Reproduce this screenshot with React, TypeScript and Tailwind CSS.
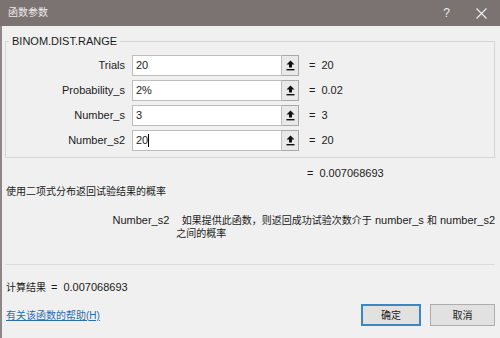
const rows = [
  { label: 'Trials', value: '20', result: '20' },
  { label: 'Probability_s', value: '2%', result: '0.02' },
  { label: 'Number_s', value: '3', result: '3' },
  { label: 'Number_s2', value: '20', result: '20', caret: true },
];

function CollapseIcon() {
  return (
    <svg width="9" height="11" viewBox="0 0 9 11">
      <path d="M4.5 0.5 L8.5 4.5 L6 4.5 L6 7.5 L3 7.5 L3 4.5 L0.5 4.5 Z" fill="#111" />
      <rect x="0.5" y="9" width="8" height="1.4" fill="#111" />
    </svg>
  );
}

export default function App() {
  return (
    <div
      className="w-[500px] h-[338px] bg-[#f0f0f0] flex flex-col overflow-hidden text-[11px] text-[#1b1b1b]"
      style={{ fontFamily: '"Liberation Sans", "Noto Sans CJK SC", sans-serif' }}
    >
      {/* Title bar */}
      <div className="h-[26px] shrink-0 bg-[#7b7372] flex items-center pl-[8px] text-[#eeeaea]">
        <span className="text-[10px] leading-none">函数参数</span>
        <span className="ml-auto mr-[26px] text-[12px] font-light leading-none">?</span>
        <svg width="11" height="11" viewBox="0 0 11 11" className="mr-[13px]">
          <path d="M0.5 0.5 L10.5 10.5 M10.5 0.5 L0.5 10.5" stroke="#f2efef" strokeWidth="1.1" />
        </svg>
      </div>

      {/* Body */}
      <div className="flex-1 flex flex-col border-l-2 border-[#8c8686] pl-[3px] pr-[5px]">
        <fieldset className="mt-[9px] border border-[#d6d6d6] pb-[6px]">
          <legend className="ml-[3px] px-[3px] leading-[13px]">BINOM.DIST.RANGE</legend>
          <div className="flex flex-col gap-[4px] pt-[7px]">
            {rows.map((r) => (
              <div key={r.label} className="flex items-center h-[21px]">
                <span className="w-[119px] text-right">{r.label}</span>
                <div className="ml-[7px] w-[150px] h-[21px] bg-white border border-[#bdbdbd] flex items-center pl-[3px]">
                  <span>{r.value}</span>
                  {r.caret && <span className="w-px h-[13px] bg-black" />}
                </div>
                <div className="w-[17px] h-[21px] bg-[#e9e9e9] border border-l-0 border-[#a9a9a9] flex items-center justify-center">
                  <CollapseIcon />
                </div>
                <span className="ml-[10px]">=</span>
                <span className="ml-[6px]">{r.result}</span>
              </div>
            ))}
          </div>
        </fieldset>

        <div className="flex h-[13px] leading-[13px] mt-[9px]">
          <span className="ml-[302px]">=</span>
          <span className="ml-[6px]">0.007068693</span>
        </div>

        <div className="mt-[5px] ml-[1px] h-[13px] leading-[13px] text-[10px]">使用二项式分布返回试验结果的概率</div>

        <div className="flex mt-[16px] leading-[13px]">
          <span className="w-[170px] text-right">Number_s2</span>
          <div className="ml-[7px] whitespace-nowrap">
            <span className="text-[10px]">&nbsp;&nbsp;如果提供此函数，则返回成功试验次数介于</span> number_s <span className="text-[10px]">和</span> number_s2
            <br />
            <span className="text-[10px]">之间的概率</span>
          </div>
        </div>

        <div className="mt-[24px] h-px bg-[#dcdcdc]" />

        <div className="mt-[16px] ml-[1px] flex items-center h-[13px] leading-[13px]">
          <span className="text-[10px]">计算结果</span>
          <span className="ml-[5px]">=</span>
          <span className="ml-[6px]">0.007068693</span>
        </div>

        <div className="mt-[10px] flex items-center">
          <a className="ml-[1px] text-[10px] text-[#2b6eaf] underline">有关该函数的帮助(H)</a>
          <button className="ml-auto w-[60px] h-[22px] bg-[#e1e1e1] border-2 border-[#3b86c4] text-[10px]">确定</button>
          <button className="ml-[9px] w-[65px] h-[22px] bg-[#e1e1e1] border border-[#adadad] text-[10px]">取消</button>
        </div>
      </div>
    </div>
  );
}
